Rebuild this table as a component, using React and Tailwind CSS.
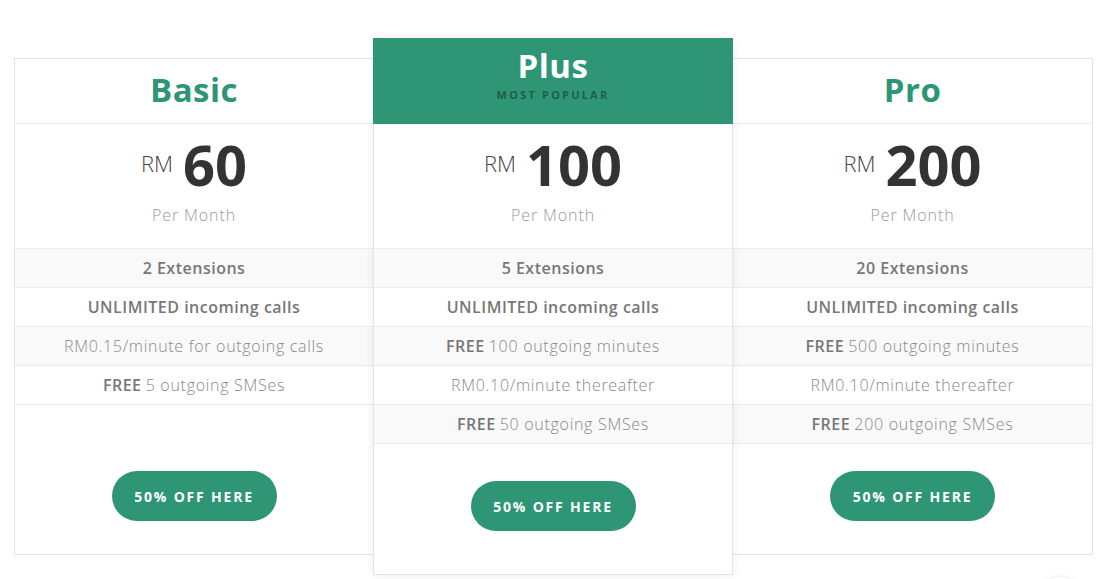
import React from 'react';

const plans = [
  {
    name: 'Basic',
    price: '60',
    features: [
      { bold: '2 Extensions' },
      { bold: 'UNLIMITED incoming calls' },
      { text: 'RM0.15/minute for outgoing calls' },
      { bold: 'FREE', text: '5 outgoing SMSes' },
    ],
  },
  {
    name: 'Plus',
    price: '100',
    popular: true,
    features: [
      { bold: '5 Extensions' },
      { bold: 'UNLIMITED incoming calls' },
      { bold: 'FREE', text: '100 outgoing minutes' },
      { text: 'RM0.10/minute thereafter' },
      { bold: 'FREE', text: '50 outgoing SMSes' },
    ],
  },
  {
    name: 'Pro',
    price: '200',
    features: [
      { bold: '20 Extensions' },
      { bold: 'UNLIMITED incoming calls' },
      { bold: 'FREE', text: '500 outgoing minutes' },
      { text: 'RM0.10/minute thereafter' },
      { bold: 'FREE', text: '200 outgoing SMSes' },
    ],
  },
];

const PlanCard = ({ plan, side }) => {
  const isPopular = plan.popular;
  const cardClass = isPopular
    ? 'relative z-10 -my-5 w-[360px] border-x border-b border-[#e4e4e4] bg-white shadow-[0_0_10px_rgba(0,0,0,0.07)]'
    : side === 'left'
    ? 'w-[359px] border-y border-l border-[#e4e4e4] bg-white'
    : 'w-[360px] border-y border-r border-[#e4e4e4] bg-white';

  return (
    <div className={`${cardClass} flex flex-col`}>
      {isPopular ? (
        <div className="-mx-px flex h-[86px] flex-col items-center bg-[#2e9675] pt-[11px]">
          <h2 className="text-[33px] font-bold leading-none tracking-[0.5px] text-white">{plan.name}</h2>
          <div className="mt-[5px] text-[11px] font-bold tracking-[2.2px] text-[#1f5f48]">MOST POPULAR</div>
        </div>
      ) : (
        <div className="flex h-[65px] items-center justify-center border-b border-[#ececec] pb-[2px]">
          <h2 className="text-[33px] font-bold tracking-[0.5px] text-[#2e9675]">{plan.name}</h2>
        </div>
      )}

      <div className="flex h-[124px] flex-col items-center pt-[12px]">
        <div className="flex items-start">
          <span className="mr-[10px] mt-[11px] text-[22px] font-light text-[#444]">RM</span>
          <span className="text-[56px] font-bold leading-none text-[#333]">{plan.price}</span>
        </div>
        <div className="mt-[11px] text-[16px] font-light tracking-[0.9px] text-[#999]">Per Month</div>
      </div>

      <div>
        {plan.features.map((f, i) => {
          const last = i === plan.features.length - 1;
          return (
            <div
              key={i}
              className={`flex items-center justify-center border-t border-[#ececec] pb-px text-[16px] text-[#888] ${
                i % 2 === 0 ? 'bg-[#f9f9f9]' : 'bg-white'
              } ${last ? 'h-[40px] border-b' : 'h-[39px]'}`}
            >
              <p>
                {f.bold && <span className="font-semibold tracking-[0.5px] text-[#777]">{f.bold}</span>}
                {f.bold && f.text && ' '}
                {f.text && <span className="font-light tracking-[0.7px]">{f.text}</span>}
              </p>
            </div>
          );
        })}
      </div>

      <div className={`mt-auto flex justify-center ${isPopular ? 'pt-[37px] pb-[43px]' : 'pt-[27px] pb-[33px]'}`}>
        <button className="h-[50px] w-[165px] rounded-full bg-[#2e9675] text-[14px] font-bold tracking-[1.8px] text-white">
          50% OFF HERE
        </button>
      </div>
    </div>
  );
};

const App = () => {
  return (
    <div className="min-h-[579px] bg-white" style={{ fontFamily: '"Open Sans", sans-serif' }}>
      <div className="flex pl-[14px] pt-[58px]">
        <PlanCard plan={plans[0]} side="left" />
        <PlanCard plan={plans[1]} />
        <PlanCard plan={plans[2]} side="right" />
      </div>
      <div className="fixed bottom-[-38px] left-[1040px] h-[40px] w-[40px] rounded-full bg-white shadow-[0_0_4px_rgba(0,0,0,0.12)]" />
    </div>
  );
};

export default App;
